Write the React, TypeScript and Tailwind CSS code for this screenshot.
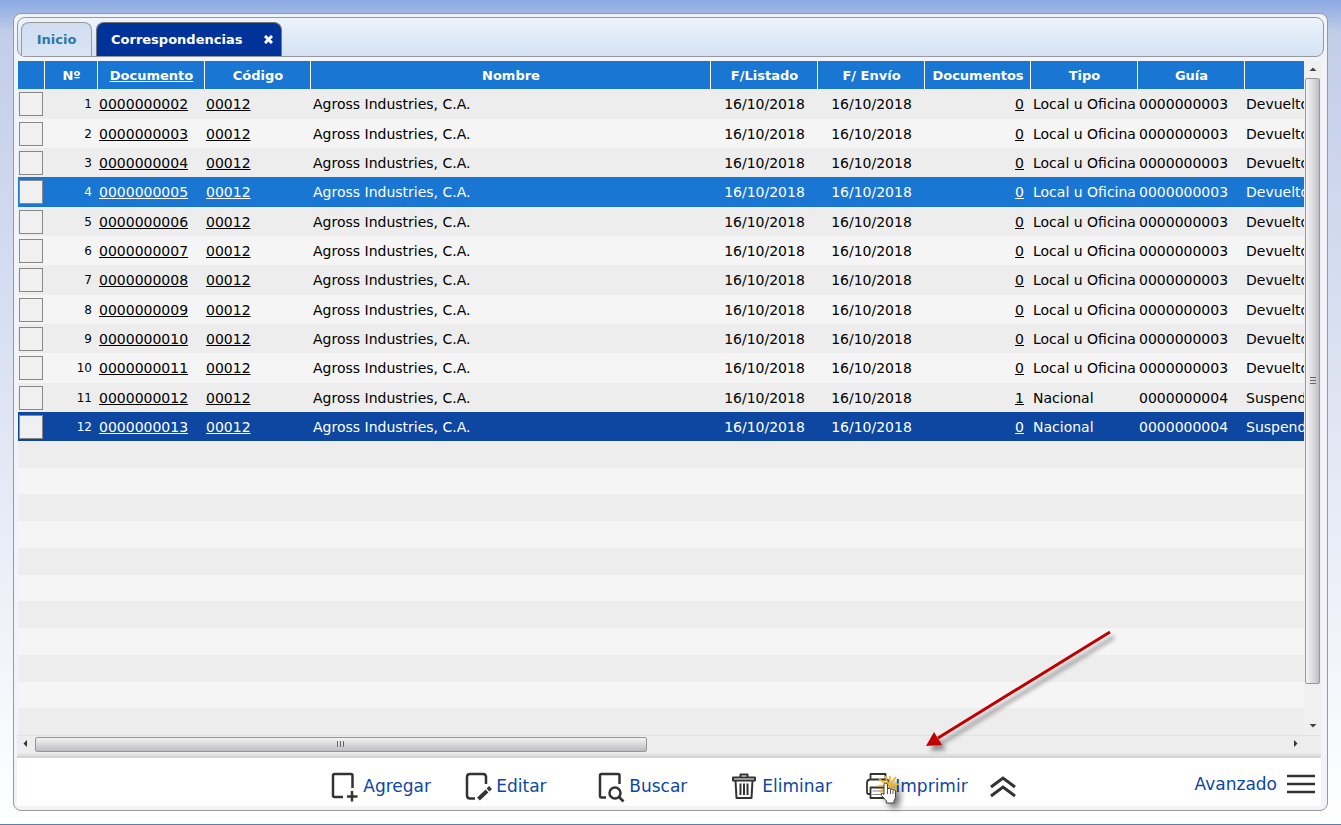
import type { ReactNode } from 'react';

type Row = {
  doc: string;
  sent: string;
  count: number;
  type: string;
  guide: string;
  status: string;
};

const rows: Row[] = Array.from({ length: 12 }, (_, i) => ({
  doc: String(i + 2).padStart(10, '0'),
  sent: '16/10/2018',
  count: i === 10 ? 1 : 0,
  type: i < 10 ? 'Local u Oficina' : 'Nacional',
  guide: i < 10 ? '0000000003' : '0000000004',
  status: i < 10 ? 'Devuelto' : 'Suspendido',
}));

const headers = ['Nº', 'Documento', 'Código', 'Nombre', 'F/Listado', 'F/ Envío', 'Documentos', 'Tipo', 'Guía', ''];

const rowColor = (i: number) => {
  if (i === 3) return 'bg-[#1976d2] text-white';
  if (i === 11) return 'bg-[#0d47a1] text-white';
  return i % 2 === 0 ? 'bg-[#ededed] text-black' : 'bg-[#f5f5f5] text-black';
};

const Tabs = () => (
  <nav className="flex h-10 items-end gap-1 rounded-lg border border-[#999] bg-linear-to-b from-[#eef4fb] to-[#d3e2f4] px-[3px] text-[13px] font-bold">
    <button className="h-[34px] w-[71px] rounded-t-lg border border-b-0 border-[#999] bg-linear-to-b from-[#d0ddf1] to-[#dae5f4] text-[#2779aa]">
      Inicio
    </button>
    <div className="flex h-[34px] items-center gap-[22px] rounded-t-lg border border-b-0 border-[#777] bg-[#003399] pr-2 pl-[14px] text-white">
      <button>Correspondencias</button>
      <button aria-label="Cerrar">
        <svg width="9" height="9" viewBox="0 0 9 9" stroke="#fff" strokeWidth="3">
          <path d="M1 1L8 8M8 1L1 8" />
        </svg>
      </button>
    </div>
  </nav>
);

const DataTable = () => (
  <table className="w-full table-fixed border-collapse text-sm whitespace-nowrap">
    <colgroup>
      <col className="w-[27px]" />
      <col className="w-[53px]" />
      <col className="w-[107px]" />
      <col className="w-[106px]" />
      <col />
      <col className="w-[107px]" />
      <col className="w-[107px]" />
      <col className="w-[106px]" />
      <col className="w-[107px]" />
      <col className="w-[107px]" />
      <col className="w-[59px]" />
    </colgroup>
    <thead>
      <tr className="h-7 bg-[#1976d2] text-[13px] text-white">
        <th className="p-0 shadow-[inset_-1px_0_0_#fff]"></th>
        {headers.map((h, i) => (
          <th key={i} className="p-0 pt-[2px] shadow-[inset_-1px_0_0_#fff] last:shadow-none">
            {h === 'Documento' ? <a href="#" className="underline">{h}</a> : h}
          </th>
        ))}
      </tr>
    </thead>
    <tbody>
      {rows.map((r, i) => (
        <tr key={r.doc} className={`h-[29px] nth-[3n+1]:h-[30px] ${rowColor(i)}`}>
          <td className="p-0 pl-px">
            <input
              type="checkbox"
              aria-label={`Seleccionar ${r.doc}`}
              className="block size-6 appearance-none border border-[#888] bg-[#f0f0f0]"
            />
          </td>
          <td className="p-0 pr-[6px] text-right text-xs">{i + 1}</td>
          <td className="p-0 pl-px"><a href="#" className="underline">{r.doc}</a></td>
          <td className="p-0 pl-px"><a href="#" className="underline">00012</a></td>
          <td className="p-0 pl-[2px]">Agross Industries, C.A.</td>
          <td className="p-0 text-center">{r.sent}</td>
          <td className="p-0 text-center">{r.sent}</td>
          <td className="p-0 pr-[7px] text-right"><a href="#" className="underline">{r.count}</a></td>
          <td className="p-0 pl-[2px]">{r.type}</td>
          <td className="p-0 pl-px">{r.guide}</td>
          <td className="overflow-hidden p-0 pl-px">{r.status}</td>
        </tr>
      ))}
    </tbody>
  </table>
);

const VerticalScroll = () => (
  <div className="flex w-[17px] flex-col items-center bg-[#f0f0f0]">
    <svg className="h-[17px] w-4 shrink-0" viewBox="0 0 16 17"><path d="M4.500 10L8 6.500L11.500 10Z" fill="#444" /></svg>
    <div className="flex h-[606px] w-[15px] items-center justify-center rounded-xs border border-[#979797] bg-linear-to-r from-[#f4f4f4] via-[#dcdce0] to-[#bdbdc3]">
      <svg width="8" height="8" viewBox="0 0 8 8" stroke="#666"><path d="M1 .5H7M1 3.5H7M1 6.5H7" /></svg>
    </div>
    <svg className="mt-auto h-[17px] w-4 shrink-0" viewBox="0 0 16 17"><path d="M4.500 6L8 9.500L11.500 6Z" fill="#444" /></svg>
  </div>
);

const HorizontalScroll = () => (
  <div className="flex h-[17px] items-center border-t border-[#e2e2e2] bg-[#ededed] pl-px">
    <svg className="h-4 w-[17px] shrink-0" viewBox="0 0 17 16"><path d="M9 4L5.500 7.500L9 11Z" fill="#333" /></svg>
    <div className="flex h-[15px] w-[47%] items-center justify-center rounded-xs border border-[#979797] bg-linear-to-b from-[#f4f4f4] via-[#d8d8da] to-[#bdbdc0]">
      <svg width="8" height="8" viewBox="0 0 8 8" stroke="#666"><path d="M.5 1V7M3.5 1V7M6.5 1V7" /></svg>
    </div>
    <svg className="mr-[18px] ml-auto h-4 w-[17px] shrink-0" viewBox="0 0 17 16"><path d="M8 4L11.500 7.500L8 11Z" fill="#333" /></svg>
  </div>
);

const Action = ({ label, children }: { label: string; children: ReactNode }) => (
  <button className="flex items-center gap-[2px]">
    <svg width="32" height="32" viewBox="0 0 32 32" fill="none" stroke="#333" strokeWidth="2.5" strokeLinejoin="round">
      {children}
    </svg>
    {label}
  </button>
);

// Hand cursor with the click burst behind it
const ClickCursor = () => (
  <svg
    className="pointer-events-none absolute top-[5px] left-[17px] drop-shadow-[4px_4px_3px_rgba(0,0,0,0.55)]"
    width="24"
    height="30"
    viewBox="0 0 24 30"
  >
    <path
      d="M11 10L1 3M11 10L7 0M11 10L12 0M11 10L18 1M11 10L21 8M11 10L19 14M11 10L0 10M11 10L2 16M11 10L6 19"
      stroke="#f0b41c"
      strokeWidth="1.600"
    />
    <path
      d="M6 9Q6 7 8 7Q9.500 7 9.500 9V15V12.500Q11.500 11.500 12.500 13.500Q14 12.500 15 14Q17 13.500 17.500 15V20Q17.500 23 16 24.500V27H8.500V25L3.500 19.500Q2.500 17.500 4 17L6 18.500Z"
      fill="#fff"
      stroke="#444"
      strokeWidth="1"
      strokeLinejoin="round"
    />
    <path d="M9.500 13V18M12.500 14V18M15 15V18" stroke="#555" strokeWidth="1" />
  </svg>
);

const Arrow = () => (
  <svg
    className="pointer-events-none absolute bottom-[46px] left-[60px] drop-shadow-[4px_5px_2px_rgba(0,0,0,0.4)]"
    width="200"
    height="130"
    viewBox="0 0 200 130"
  >
    <path d="M189 5L17 111" stroke="#c00000" strokeWidth="3" />
    <path d="M5 119L13 105L21 118Z" fill="#c00000" />
  </svg>
);

const Toolbar = () => (
  <div className="flex h-12 items-center bg-white pt-[10px] text-[17px] text-[#0d47a1]">
    <div className="flex flex-1 justify-center pl-[134px]">
      <div className="grid grid-cols-[repeat(4,133px)_129px_26px] items-center">
        <Action label="Agregar">
          <path d="M14 26H5.500Q4 26 4 24.500V4.500Q4 3 5.500 3H22Q23.500 3 23.500 4.500V17M23 20V30.500M18 25.500H28.500" />
        </Action>
        <Action label="Editar">
          <path d="M13 27.500H8Q5 27.500 5 24.500V6Q5 3 8 3H21Q24 3 24 6V13" />
          <path d="M16.500 28L25 20" strokeWidth="4" />
          <path d="M26 19L28.500 16.500" strokeWidth="4" />
        </Action>
        <Action label="Buscar">
          <path d="M11 26.500H6.500Q5 26.500 5 25V4.500Q5 3 6.500 3H23Q24.500 3 24.500 4.500V13" />
          <circle cx="20" cy="22" r="5.500" />
          <path d="M24 26L28.500 30.500" strokeWidth="2.600" />
        </Action>
        <Action label="Eliminar">
          <path d="M12.500 6.500V3.500H19.500V6.500M5 6.500H27V9.500H5ZM7.500 9.500L8.500 27H23.500L24.500 9.500" strokeWidth="2" />
          <path d="M12.500 12.500V24M16 12.500V24M19.500 12.500V24" strokeWidth="2" />
        </Action>
        <div className="relative">
          <Action label="Imprimir">
            <path
              d="M9.500 8V3H24.500V8M9.500 23H7.500Q6 23 6 21V12Q6 8.500 9.500 8.500H24.500Q28 8.500 28 12V21Q28 23 26 23H24.500M9.500 16.500H24.500V27H9.500Z"
              strokeWidth="1.800"
            />
            <path d="M11.500 20H22.500M11.500 23.500H22.500" stroke="#888" strokeWidth="1" />
          </Action>
          <ClickCursor />
          <Arrow />
        </div>
        <button aria-label="Mostrar más">
          <svg width="26" height="24" viewBox="0 0 26 24" fill="none" stroke="#333" strokeWidth="3">
            <path d="M1 12L13 3L25 12M1 21L13 12L25 21" />
          </svg>
        </button>
      </div>
    </div>
    <button className="mr-[6px] mb-1 flex items-center gap-[10px]">
      Avanzado
      <svg width="28" height="22" viewBox="0 0 28 22" stroke="#333" strokeWidth="2.400"><path d="M0 2H28M0 10H28M0 18H28" /></svg>
    </button>
  </div>
);

export default function App() {
  return (
    <div className="flex min-h-screen flex-col border-b border-[#5f7f9f] bg-linear-to-b from-[#8ba9e3] from-0% via-[#c2cde8] via-4% to-white px-[13px] pt-[13px] pb-[13px] font-['DejaVu_Sans',sans-serif]">
      <main className="flex flex-1 flex-col rounded-lg border border-[#999] bg-[#f0f4f8] p-[3px] pb-1">
        <Tabs />
        <div className="mr-[3px] flex flex-1 flex-col pt-1">
          <div className="flex flex-1 pl-px">
            <div className="flex flex-1 flex-col overflow-hidden">
              <DataTable />
              <div className="flex flex-1 flex-col">
                {Array.from({ length: 11 }, (_, i) => (
                  <div key={i} className="flex-1 odd:bg-[#ededed] even:bg-[#f5f5f5]"></div>
                ))}
              </div>
            </div>
            <VerticalScroll />
          </div>
          <HorizontalScroll />
          <div className="h-[6px] bg-linear-to-b from-[#f0f0f0] to-[#d0d0d0]"></div>
          <Toolbar />
        </div>
      </main>
    </div>
  );
}
